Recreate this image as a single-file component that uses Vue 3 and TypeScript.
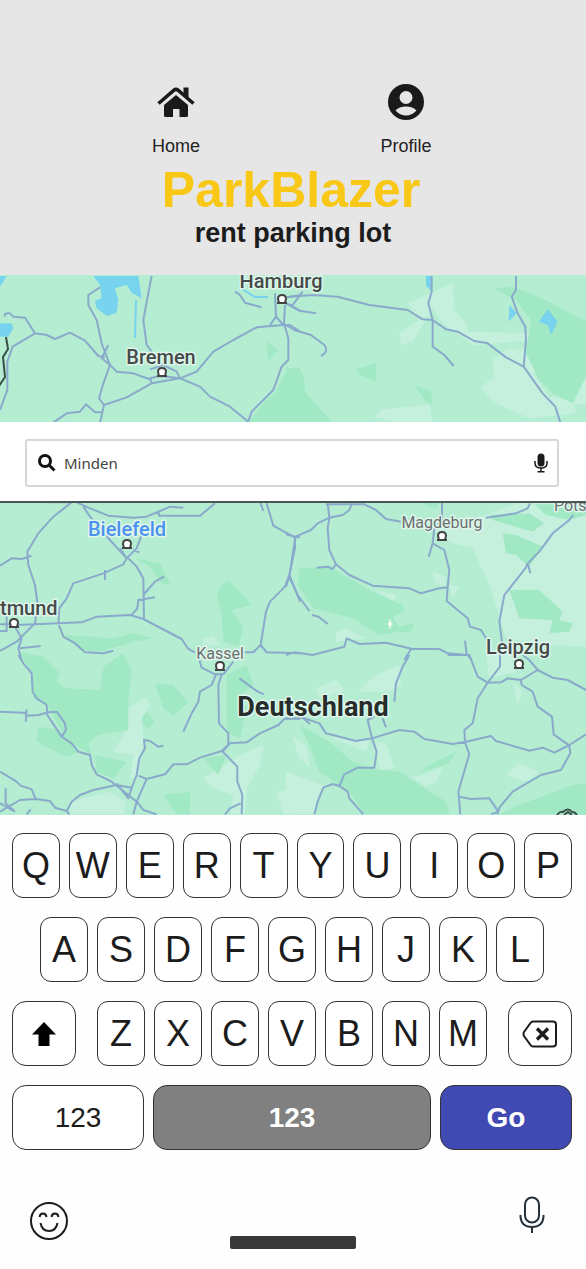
<script setup lang="ts">
import { ref } from 'vue'

interface Tile {
  at: string
  dark: string
  light: string
  water: string
  roads: string
}

interface City {
  name: string
  x: number
  y: number
  size: number
  tone: string
  anchor: 'start' | 'middle'
}

const query = ref<string>('Minden')
const topRow: string[] = [...'QWERTYUIOP']
const homeRow: string[] = [...'ASDFGHJKL']
const bottomRow: string[] = [...'ZXCVBNM']

function type(letter: string): void {
  query.value += letter.toLowerCase()
}

function erase(): void {
  query.value = query.value.slice(0, -1)
}

const tiles: Tile[] = [
  {
    at: 'translate(0 270) scale(.33333)',
    dark: 'M800 215L835 240L805 272ZM900 290L860 300L825 370L790 400L745 458H900Z',
    light: 'M780 430L840 400L880 430L870 458H770Z',
    water: 'M0 160L35 160L40 175L25 200L0 200ZM0 18H20L0 50ZM280 18L300 45L305 85L285 92L290 115L320 138L350 128L355 90L345 55L380 45L395 68L425 85L415 18Z',
    roads: 'M15 140Q10 128 30 130L40 140L75 143L105 190L140 195L165 207L210 188L255 212L295 258L315 262M0 420L22 360L22 275L38 230L105 190M300 52L265 75L265 105L290 150L305 220L330 285L350 305L400 310L455 330M325 225L305 265L330 285L310 340L297 385L312 405L300 458M312 405L380 382L455 340L540 325L590 305L640 245L700 210L770 172L850 165M540 325L600 350L630 380L690 410L745 455M540 325L530 305L490 285L450 298M455 340L450 325L480 318L540 325M160 458L200 430L240 425L258 403L285 427L305 427M455 18L445 70L430 150L440 225L455 245M705 65L720 75L735 98L785 112M745 455L755 425L820 360L845 290L865 270L865 205L852 160L855 105M825 70L828 140L850 165M810 165L828 140M850 165L870 165L900 185M860 82L900 76M860 100L900 122',
  },
  {
    at: 'translate(286 270) scale(.33333)',
    dark: 'M625 55L680 50L780 90L900 155V320L860 400L800 370L760 330L720 250L735 150L690 90ZM210 298L270 280L270 335L225 318ZM385 345L435 365L440 405L415 390ZM0 290L50 310L60 370L140 458H0Z',
    light: 'M365 100L500 40L505 120L540 160L545 185L740 190L740 210L560 225L470 160L440 115L380 215L345 225L340 190L400 150ZM585 350L625 320L620 270L665 235L740 240L835 290L840 335L760 290L740 310L790 380L860 390L870 430L730 445L620 395ZM900 310L870 350L865 405L900 400ZM265 440L290 418L430 405L440 458H340ZM785 205L850 200L810 250Z',
    water: 'M420 18h17v45l-17-15ZM670 105L692 130L668 155ZM758 155L785 118L815 155L795 195L785 165Z',
    roads: 'M10 80L80 75L155 80L250 105L365 120L410 148L440 150L480 178L515 185L565 213L605 220L660 262L713 290L770 370L808 410L823 458M437 18L437 65L427 100L440 150L440 230L475 255L503 288M690 18L690 60L677 80L695 130L718 170L720 210L713 290M0 100L40 122L90 130M0 165L25 180L75 195L115 225Q130 245 105 258M0 103L20 105L50 65',
  },
  {
    at: 'translate(0 495) scale(.33333)',
    dark: 'M650 300Q665 260 690 258L755 330L695 345L730 400L715 455L670 440L665 360ZM405 190L480 205L510 265L490 270L450 215ZM195 420L340 430L400 415L460 430L400 440L300 470L240 465Z',
    light: 'M610 430L640 425L660 450H610Z',
    water: '',
    roads: 'M140 22H215L160 65L115 115L82 170L85 210L105 270L113 330L105 385L50 440L0 468M0 212L35 190L65 192L95 182M225 20L265 38L325 62L400 68L440 65L480 48L510 35L550 38M250 35L270 65L330 135L380 190L410 160L425 120M380 190L360 160M400 165L418 172M475 50L478 62H600L645 25M380 190L370 208L310 235L220 265L200 310L178 340L175 385L190 425L225 445L255 472L310 475L340 467M315 225L315 255M385 190L410 215L430 250L432 375M430 300L465 260L492 245M395 360L412 340L415 315L465 307M0 388H45M0 408H20V360M50 390L245 382L290 365L390 360L430 372L545 432L565 462L585 472M45 395L65 430L55 460L65 495M60 460L122 453M780 20L790 48M800 25L820 92L885 128L900 125M885 128L885 160L868 240L855 275L810 320L798 350L782 450L760 472L735 472M868 240L900 320M782 450L800 472L900 475',
  },
  {
    at: 'translate(286 495) scale(.33333)',
    dark: 'M40 220L130 215L260 290L350 330L355 350L320 365L340 395L385 385L375 410L340 410L280 420L200 370L80 340L35 270ZM650 115L690 120L770 155L730 215L690 180L660 175ZM670 285L760 285L830 350L820 375L860 385L850 410L790 415L800 375L700 370ZM610 60L730 55L775 85L740 110L620 75ZM745 28H900V60L850 75L780 60ZM400 22H460L450 42Z',
    light: 'M440 100L600 60L700 22H900V455L800 450L660 430L610 270L560 160L500 145L470 130ZM440 230L480 245L475 275L445 260ZM150 415L175 400L240 430L150 440ZM265 285L330 300L325 320ZM490 270L520 275L500 310Z',
    water: '',
    roads: 'M0 118L28 125L75 105L95 85L130 68L170 60L190 45L198 25M125 25L130 68L125 100L130 165L150 208L190 240L260 272L370 280L405 295L460 280L485 277M120 28H235L270 45L300 72L345 80M92 218L125 215L140 222L150 208M28 125L10 245L0 275M10 245L35 300L70 348M78 360L98 365L125 387M468 20V75L445 100L440 145L428 185M440 145L475 165L490 225L485 277L482 318L545 370L552 395L585 405L600 430M600 68L690 55L725 40L732 25M862 60L850 75L800 115L760 170L725 205L718 220L655 300L640 380L648 440M725 205L733 235M0 480L25 472L80 480L125 468L175 455L182 430L220 447L300 443L380 462L460 462L485 475L545 480L558 495M375 462L355 495M537 437L542 478',
  },
  {
    at: 'translate(0 655) scale(.33333)',
    dark: 'M60 -8L130 5L180 55L170 80L200 100L300 105L310 35L370 -5L395 45L385 135V225L295 240L265 265L275 300L215 265L180 220L140 150L100 130L98 60ZM115 215L180 225L240 290L200 305L110 260ZM465 85L520 90L565 145L520 180L490 160ZM425 190L440 170L465 200L440 225ZM680 60L740 30L760 90L720 120L740 160L720 250L680 230ZM610 310L680 300L655 360ZM490 420L570 410L570 478H530ZM285 300L380 320L340 370L290 350Z',
    light: 'M385 160L440 125L450 150L425 190L430 260L415 370L390 370L400 300L340 290L370 240ZM610 370L720 300L790 270L780 330L740 400L735 478H690L700 420L640 400ZM210 440L330 410L380 440L370 478H210ZM830 410L900 400V478H850Z',
    water: '',
    roads: 'M55 0L70 25L95 55L98 110L110 130L140 150L142 180L185 245L215 265L235 290L270 300L275 330L290 358L335 380L410 440L430 465L470 478M0 170L75 173L80 182L115 180L145 172L170 170L195 205L198 225L185 245M80 163L77 200M0 350L50 380L62 392L95 403L107 432L60 435L0 470M107 432L150 438L165 458L200 468L208 478M17 400V445L45 470M0 445L45 470M200 468L215 440L240 420L280 405L350 390L395 398L410 360L418 310L435 280L432 255L450 258L475 275L490 272M415 362L440 372L410 440L400 478M350 385L385 430L395 398M440 372L495 358L520 328L560 328L600 308L665 288L690 265L740 262L780 235L835 210L855 190L900 192M598 15L605 38L645 58H670L700 20M648 58L635 90L600 110L595 140L575 175L550 230M665 58L655 90L657 205L685 235L685 270L668 290L712 335L712 380L727 420L725 478M722 445L690 460L675 478M718 70L770 108L792 118M80 478l12-15',
  },
  {
    at: 'translate(286 655) scale(.33333)',
    dark: 'M40 210L130 260L200 320L280 345L340 350L480 440L490 478H235L190 410L100 350L70 270ZM395 355L440 325L510 290L490 325ZM640 478L700 450L860 390L900 385V478Z',
    light: 'M20 245L60 270L75 340L40 310ZM270 260L300 265L325 340L280 345ZM375 365L410 360L470 335L450 380L420 395ZM660 360L700 325L760 350L720 380ZM90 100L150 75L180 110L100 125ZM215 110L270 60L340 30L345 90L310 110ZM0 350L110 390L85 478H0ZM680 80L710 110L695 145ZM130 245L250 260L240 290ZM600 0H680L690 50L610 70Z',
    water: '',
    roads: 'M370 0L350 35L330 85L325 140M0 192L50 188L100 205L120 235L210 258L265 248L340 225L385 230L415 252L500 267L540 260L615 243L630 258L730 287L770 278L805 293L850 270L900 238M50 188L72 207M265 185L245 195L258 250L272 290L265 338L215 338L175 358L160 393L185 410L190 430L232 478M290 190L300 217M85 478L95 440L112 398L140 387L160 393M485 0H550L575 65L605 83L645 82L665 70L705 75L755 45L730 15L710 0M755 45L800 68L845 75L900 105M705 75L707 90L740 110L755 155L798 185L803 238L850 272L853 295L825 345L765 360L680 410L640 458L635 478M642 0V35L605 83L575 130L560 205L535 225L537 262L550 297L517 410L523 478M520 425L555 432L610 430L637 470L615 478',
  },
]

const cities: City[] = [
  { name: 'Hamburg', x: 281, y: 288, size: 20, tone: 'city', anchor: 'middle' },
  { name: 'Bremen', x: 161, y: 364, size: 20, tone: 'city', anchor: 'middle' },
  { name: 'Bielefeld', x: 127, y: 536, size: 20, tone: 'visited', anchor: 'middle' },
  { name: 'Magdeburg', x: 442, y: 528, size: 16, tone: 'town', anchor: 'middle' },
  { name: 'Pots', x: 554, y: 511, size: 16, tone: 'town', anchor: 'start' },
  { name: 'tmund', x: 0, y: 615, size: 20, tone: 'city', anchor: 'start' },
  { name: 'Kassel', x: 220, y: 659, size: 16, tone: 'town', anchor: 'middle' },
  { name: 'Leipzig', x: 518, y: 654, size: 20, tone: 'city', anchor: 'middle' },
  { name: 'Deutschland', x: 313, y: 716, size: 27, tone: 'country', anchor: 'middle' },
]

const markers: [number, number][] = [
  [282, 299], [162, 372], [127, 544], [442, 536], [14, 623], [220, 666], [519, 664],
]
</script>

<template>
  <main class="app">
    <header class="header">
      <nav class="nav">
        <a class="nav-link" href="#home">
          <svg class="nav-icon" viewBox="0 0 40 40" aria-hidden="true">
            <path d="M20 13L32 23V33.500a1.500 1.500 0 0 1-1.500 1.500H23.500V27H17v8H9.500A1.500 1.500 0 0 1 8 33.500V23Z" />
            <path d="M2.500 21.500L18 8.200Q20 6.500 22 8.200L37.500 21.500" fill="none" stroke="currentColor" stroke-width="3.500" />
            <path d="M27.500 5.500h5V17L27.500 12.500Z" />
          </svg>
          <span>Home</span>
        </a>
        <a class="nav-link" href="#profile">
          <svg class="nav-icon" viewBox="0 0 40 40" aria-hidden="true">
            <circle cx="20" cy="20" r="18" />
            <circle class="cutout" cx="20" cy="15.500" r="6.500" />
            <path class="cutout" d="M9.500 28.500Q13 24.500 20 24.500T30.500 28.500Q26 33.500 20 33.500T9.500 28.500Z" />
          </svg>
          <span>Profile</span>
        </a>
      </nav>
      <h1 class="title">ParkBlazer</h1>
      <p class="subtitle">rent parking lot</p>
    </header>

    <section class="map" aria-label="Map">
      <svg class="map-canvas" viewBox="0 275 586 540" preserveAspectRatio="xMidYMid slice">
        <g v-for="tile in tiles" :key="tile.at" :transform="tile.at">
          <path class="light" :d="tile.light" />
          <path class="dark" :d="tile.dark" />
          <path class="water" :d="tile.water" />
        </g>
        <path class="stream" d="M136 300L135 338M242 289L255 297H268" />
        <g v-for="tile in tiles" :key="tile.at" :transform="tile.at">
          <path class="road" :d="tile.roads" />
        </g>
        <path class="border" d="M6 337L8 349L3 357L5 377L-1 386" />
        <path class="spark" d="M390 618L391 623L393 624L391 625L390 630L389 625L387 624L389 623Z" />
        <path class="border" d="M557 815q3-4 6-3q5-5 9 0q4 0 5 4M564 815l4-3l4 3" />
        <g v-for="[x, y] in markers" :key="`${x}-${y}`" :transform="`translate(${x} ${y})`">
          <path class="marker" d="M-3 4L-4 0Q-4-4 0-4T4 0L3 4Z" />
          <path class="marker-base" d="M-5 4H-2M2 4H5" />
        </g>
        <text
          v-for="city in cities"
          :key="city.name"
          :class="['label', city.tone]"
          :x="city.x"
          :y="city.y"
          :font-size="city.size"
          :text-anchor="city.anchor"
        >{{ city.name }}</text>
      </svg>

      <form class="search-panel" role="search" @submit.prevent>
        <div class="search-box">
          <label class="search-label" for="place" aria-label="Search a place">
            <svg class="search-icon" viewBox="0 0 18 18" aria-hidden="true">
              <circle cx="7" cy="7" r="5.500" />
              <path d="M11 11L16.500 16.500" />
            </svg>
          </label>
          <input id="place" v-model="query" class="search-input" type="text" autocomplete="off" />
          <button class="plain" type="button" aria-label="Voice search">
            <svg class="voice-icon" viewBox="0 0 14 20" aria-hidden="true">
              <rect x="3.500" y="0.500" width="7" height="13" rx="3.500" />
              <path d="M1 8V10Q1 15 7 15T13 10V8M7 15V18.500M3.500 18.700H10.500" fill="none" stroke="currentColor" stroke-width="1.500" />
            </svg>
          </button>
        </div>
      </form>
    </section>

    <section class="keyboard" aria-label="Keyboard">
      <div class="row">
        <button v-for="k in topRow" :key="k" class="key" type="button" @click="type(k)">{{ k }}</button>
      </div>
      <div class="row inset">
        <button v-for="k in homeRow" :key="k" class="key" type="button" @click="type(k)">{{ k }}</button>
      </div>
      <div class="row spread">
        <button class="key side" type="button" aria-label="Shift">
          <svg class="shift-icon" viewBox="0 0 24 24" aria-hidden="true">
            <path d="M12 0L24 12.500H17.500V24H6.500V12.500H0Z" />
          </svg>
        </button>
        <div class="row letters">
          <button v-for="k in bottomRow" :key="k" class="key" type="button" @click="type(k)">{{ k }}</button>
        </div>
        <button class="key side" type="button" aria-label="Delete" @click="erase">
          <svg class="erase-icon" viewBox="0 0 36 28" aria-hidden="true">
            <path d="M11 1.500H31Q34 1.500 34 4.500V23.500Q34 26.500 31 26.500H11Q9.500 26.500 8.500 25L2 16Q1 14 2 12L8.500 3Q9.500 1.500 11 1.500Z" stroke-width="2" />
            <path d="M15 8.500L26 19.500M26 8.500L15 19.500" stroke-width="3.400" />
          </svg>
        </button>
      </div>
      <div class="row">
        <button class="key wide" type="button">123</button>
        <button class="key space" type="button">123</button>
        <button class="key wide go" type="button">Go</button>
      </div>
    </section>

    <footer class="footer">
      <button class="plain" type="button" aria-label="Emoji">
        <svg class="emoji-icon" viewBox="0 0 40 40" aria-hidden="true">
          <circle cx="20" cy="20" r="18" />
          <path d="M10.500 16Q11 12.500 14 12.500T17.500 16M22.500 16Q23 12.500 26 12.500T29.500 16" />
          <path d="M11.500 22Q13 30 20 30T28.500 22" />
        </svg>
      </button>
      <span class="home-bar"></span>
      <button class="plain dictate" type="button" aria-label="Dictate">
        <svg class="dictate-icon" viewBox="0 0 26 38" aria-hidden="true">
          <rect x="6" y="1.500" width="14" height="25" rx="7" />
          <path d="M1.500 19V21Q2.500 31 13 31T24.500 21V19M13 31V37" />
        </svg>
      </button>
    </footer>
  </main>
</template>

<style>
body {
  margin: 0;
  background: #fefefe;
}
</style>

<style scoped>
.app {
  font-family: 'Liberation Sans', Arial, sans-serif;
  color: #1c1c1c;
}

.header {
  padding: 82px 4px 28px 0;
  background: #e6e6e6;
  text-align: center;
}

.nav {
  display: flex;
  justify-content: center;
  gap: 170px;
}

.nav-link {
  display: flex;
  flex-direction: column;
  align-items: center;
  gap: 13px;
  width: 60px;
  font-size: 18px;
  line-height: 22px;
  color: #222;
  text-decoration: none;
}

.nav-icon {
  width: 40px;
  height: 40px;
  fill: #1a1a1a;
  color: #1a1a1a;
}

.nav-icon .cutout {
  fill: #e6e6e6;
}

.title {
  margin: 5px 0 0;
  font-size: 50px;
  line-height: 56px;
  color: #f9c816;
}

.subtitle {
  margin: 0;
  padding-left: 4px;
  font-size: 27px;
  font-weight: bold;
  line-height: 30px;
}

.map {
  display: grid;
  margin-top: -1px;
  background: #b4edd2;
}

.map-canvas {
  grid-area: 1 / 1;
  width: 100%;
  height: 540px;
}

.dark { fill: #a0e9c4; }
.light { fill: #c5f0de; }
.water { fill: #78d3ee; }
.stream { fill: none; stroke: #78d3ee; stroke-width: 2; }
.road { fill: none; stroke: #8aaacb; stroke-width: 6; stroke-linejoin: round; }
.border { fill: none; stroke: #3b4f49; stroke-width: 2; }
.spark { fill: #fff; }
.marker { fill: #fff; stroke: #444; stroke-width: 2; }
.marker-base { stroke: #444; stroke-width: 2; }

.label {
  font-family: Roboto, sans-serif;
  paint-order: stroke;
  stroke: #e0f6ec;
  stroke-width: 3px;
  stroke-linejoin: round;
}

.city { fill: #454a49; font-weight: 500; }
.visited { fill: #4b92f0; font-weight: 500; }
.town { fill: #69706e; }
.country { fill: #272d2b; font-weight: bold; }

.search-panel {
  grid-area: 1 / 1;
  align-self: start;
  margin-top: 147px;
  padding: 17px 27px 14px 25px;
  background: #fff;
  border-bottom: 2px solid #4a5653;
}

.search-box {
  display: flex;
  align-items: center;
  box-sizing: border-box;
  height: 48px;
  padding: 0 9px 0 11px;
  border: 2px solid #d6d6d6;
  border-radius: 3px;
}

.search-label {
  display: flex;
}

.search-icon {
  width: 18px;
  height: 18px;
  fill: none;
  stroke: #111;
  stroke-width: 3;
}

.search-input {
  flex: 1;
  min-width: 0;
  padding: 0 8px;
  border: 0;
  outline: 0;
  background: none;
  font: 15px 'Noto Sans', sans-serif;
  color: #444;
}

.plain {
  display: flex;
  padding: 0;
  border: 0;
  background: none;
  color: #1a1a1a;
}

.voice-icon {
  width: 14px;
  height: 20px;
  fill: currentColor;
}

.keyboard {
  display: grid;
  gap: 19px;
  padding: 18px 14px 0 12px;
}

.row {
  display: flex;
  gap: 9px;
}

.inset {
  padding: 0 28px;
}

.spread {
  gap: 21px;
}

.letters {
  flex: 1;
}

.key {
  display: flex;
  flex: 1;
  align-items: center;
  justify-content: center;
  min-width: 0;
  height: 65px;
  padding: 0;
  border: 1px solid #333;
  border-radius: 11px;
  background: #fff;
  font: 36px 'Liberation Sans', Arial, sans-serif;
  color: #1c1c1c;
}

.side {
  flex: 0 0 64px;
  border-radius: 14px;
}

.wide {
  flex: 0 0 132px;
  border-radius: 14px;
  font-size: 28px;
}

.space {
  border-radius: 14px;
  background: #808080;
  font-size: 28px;
  font-weight: bold;
  color: #fff;
}

.go {
  background: #414ab2;
  font-weight: bold;
  color: #fff;
}

.shift-icon {
  width: 24px;
  height: 24px;
  fill: #000;
}

.erase-icon {
  width: 36px;
  height: 28px;
  fill: none;
  stroke: #1c1c1c;
}

.footer {
  display: grid;
  grid-template-columns: 1fr auto 1fr;
  align-items: start;
  padding: 46px 29px 20px;
}

.emoji-icon {
  width: 40px;
  height: 40px;
  margin-top: 5px;
  fill: none;
  stroke: #1c1c1c;
  stroke-width: 2;
}

.home-bar {
  width: 126px;
  height: 13px;
  margin-top: 40px;
  border-radius: 2px;
  background: #383838;
}

.dictate {
  justify-self: end;
  margin-right: 12px;
}

.dictate-icon {
  width: 26px;
  height: 38px;
  fill: none;
  stroke: #25313a;
  stroke-width: 2;
}
</style>
